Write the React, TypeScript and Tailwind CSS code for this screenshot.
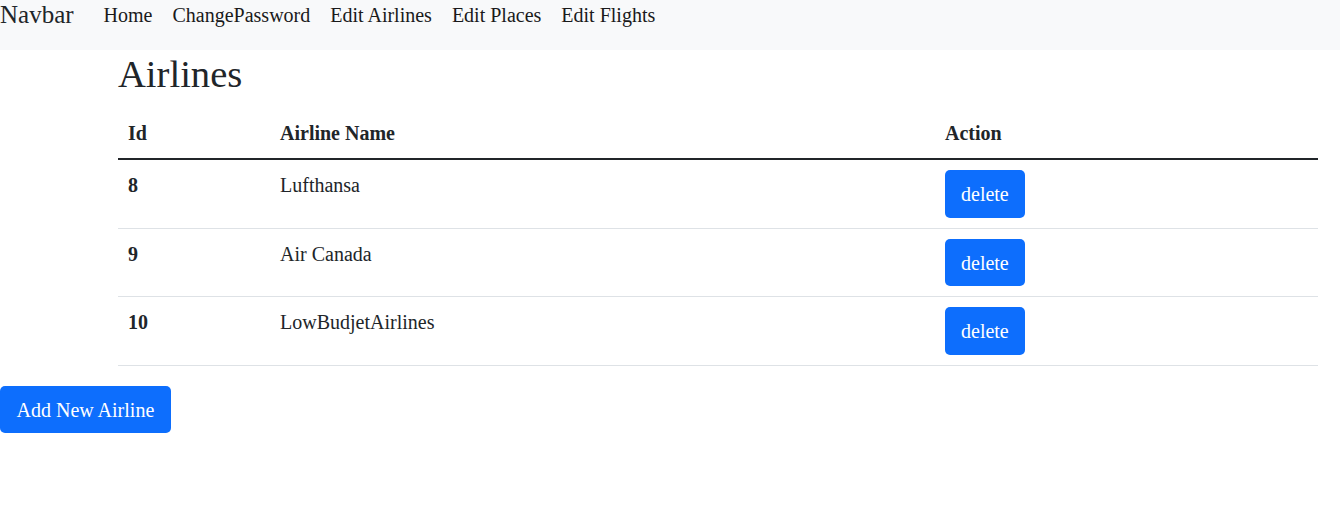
const airlines = [
  { id: 8, name: "Lufthansa" },
  { id: 9, name: "Air Canada" },
  { id: 10, name: "LowBudjetAirlines" },
];

const links = ["Home", "ChangePassword", "Edit Airlines", "Edit Places", "Edit Flights"];

export default function App() {
  return (
    <div className="min-h-screen bg-white text-[#212529] font-['Liberation_Serif','Times_New_Roman',serif]">
      <nav className="h-[50px] bg-[#f8f9fa] flex items-start">
        <a className="text-[25px] leading-[30px] mr-[20px] text-[#212529]">Navbar</a>
        <ul className="flex">
          {links.map((l) => (
            <li key={l}>
              <a className="block px-[10px] text-[20px] leading-[30px] text-[#1a1a1a]">{l}</a>
            </li>
          ))}
        </ul>
      </nav>

      <div className="ml-[118px] w-[1200px]">
        <h2 className="text-[38.6px] leading-[1.2] mb-[11.5px] pt-[0.5px] font-normal">Airlines</h2>
        <table className="w-full text-[20px] leading-[30px] mb-[20px] border-collapse">
          <thead>
            <tr className="border-b-[2.5px] border-[#212529]">
              <th className="w-[152px] p-[10px] text-left font-bold">Id</th>
              <th className="w-[665px] p-[10px] text-left font-bold">Airline Name</th>
              <th className="p-[10px] text-left font-bold">Action</th>
            </tr>
          </thead>
          <tbody>
            {airlines.map((a) => (
              <tr key={a.id} className="border-b border-[#dee2e6]">
                <th className="p-[10px] text-left font-bold align-top">{a.id}</th>
                <td className="p-[10px] align-top">{a.name}</td>
                <td className="p-[10px] align-top">
                  <button className="bg-[#0d6efd] text-white text-[20px] leading-[30px] px-[16px] py-[8.75px] rounded-[5px]">
                    delete
                  </button>
                </td>
              </tr>
            ))}
          </tbody>
        </table>
      </div>

      <button className="bg-[#0d6efd] text-white text-[20px] leading-[30px] px-[16.5px] py-[8.75px] rounded-[5px]">
        Add New Airline
      </button>
    </div>
  );
}
